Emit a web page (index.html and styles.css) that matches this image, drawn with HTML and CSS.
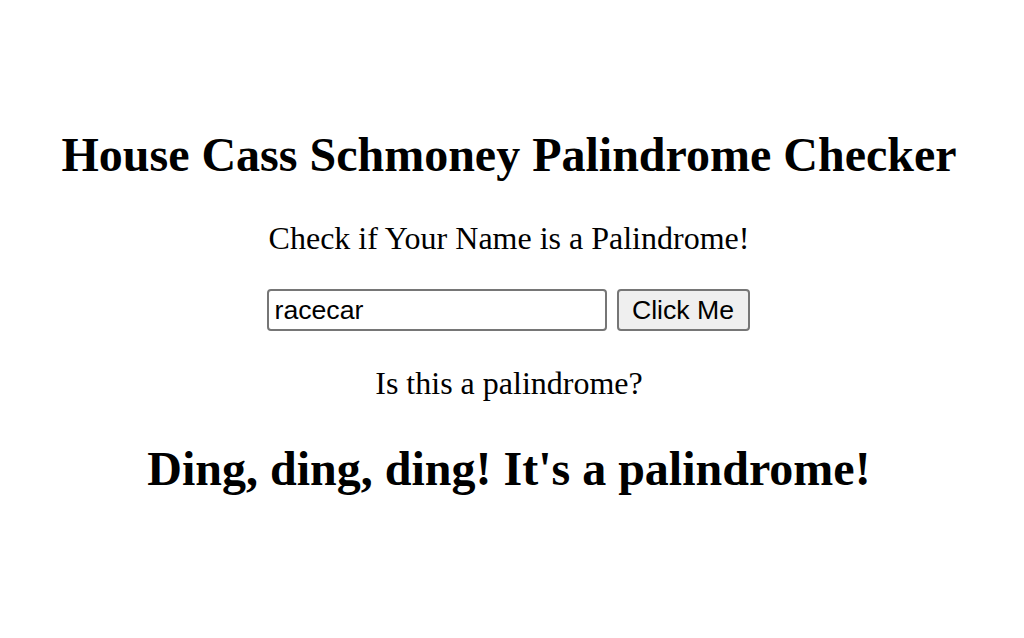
FILE: index.html
```html
<!DOCTYPE html>
<html lang="en">
<head>
<meta charset="utf-8">
<title>House Cass Schmoney Palindrome Checker</title>
<link rel="stylesheet" href="styles.css">
</head>
<body>
<main class="page">
  <h1 class="title">House Cass Schmoney Palindrome Checker</h1>
  <p class="subtitle">Check if Your Name is a Palindrome!</p>
  <form class="checker">
    <input class="name-input" type="text" value="racecar">
    <button class="check-btn" type="button">Click Me</button>
  </form>
  <p class="question">Is this a palindrome?</p>
  <h2 class="result">Ding, ding, ding! It's a palindrome!</h2>
</main>
</body>
</html>
```
FILE: styles.css
```css
html, body {
  margin: 0;
  padding: 0;
  background: #fff;
}
body {
  font-family: "Liberation Serif", "Times New Roman", serif;
  color: #000;
}
.page {
  display: flex;
  flex-direction: column;
  align-items: center;
  text-align: center;
  padding-top: 127px;
  padding-right: 6px;
}
.title {
  margin: 0;
  font-size: 48px;
  line-height: 55px;
  font-weight: bold;
}
.subtitle {
  margin: 38px 0 0;
  font-size: 32px;
  line-height: 37px;
}
.checker {
  margin: 32px 0 0;
  padding-right: 2px;
  display: flex;
  gap: 10px;
  align-items: center;
}
.name-input {
  box-sizing: border-box;
  width: 340px;
  height: 42px;
  border: 2px solid #767676;
  border-radius: 4px;
  padding: 0 6px;
  font-family: "Liberation Sans", Arial, sans-serif;
  font-size: 26.67px;
  color: #000;
  background: #fff;
  outline: none;
}
.check-btn {
  box-sizing: border-box;
  width: 133px;
  height: 42px;
  border: 2px solid #767676;
  border-radius: 4px;
  background: #efefef;
  font-family: "Liberation Sans", Arial, sans-serif;
  font-size: 26.67px;
  color: #000;
  padding: 0;
}
.question {
  margin: 34px 0 0;
  font-size: 32px;
  line-height: 37px;
}
.result {
  margin: 39px 0 0;
  font-size: 48px;
  line-height: 55px;
  font-weight: bold;
}
```
